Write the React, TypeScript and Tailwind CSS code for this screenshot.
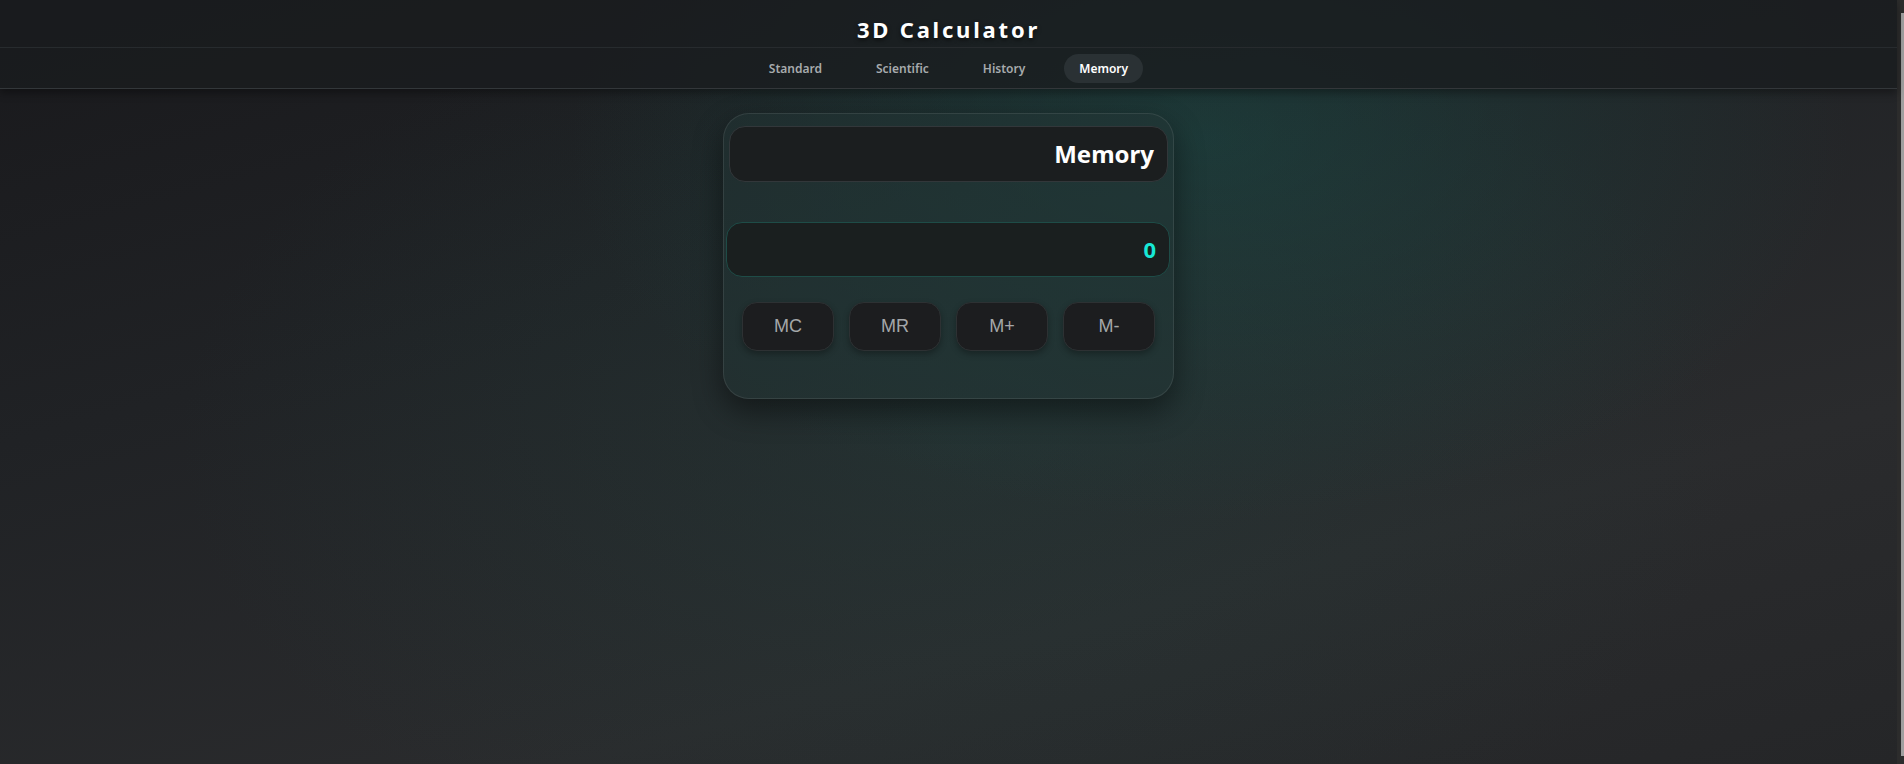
import { useState } from "react";

// Tabs shown in the header - only Memory is rendered in this view
const TABS = ["Standard", "Scientific", "History", "Memory"];
const MEMORY_KEYS = ["MC", "MR", "M+", "M-"];

export default function App() {
  const [active, setActive] = useState("Memory");
  const [memory] = useState(0);

  return (
    <div className="flex h-[764px] w-full overflow-hidden bg-[#1e1f22]">
      <div className="relative flex-1 flex flex-col bg-[radial-gradient(ellipse_640px_380px_at_1210px_140px,rgba(24,84,78,0.42),transparent),radial-gradient(ellipse_780px_480px_at_960px_440px,rgba(34,70,66,0.32),transparent),linear-gradient(165deg,#19191c_0%,#202225_35%,#2a2b2d_72%,#252628_100%)] font-['Noto_Sans',sans-serif]">
        {/* Header */}
        <header className="bg-[rgba(26,28,31,0.78)] border-b border-[#33373a] shadow-[0_4px_8px_rgba(0,0,0,0.35)]">
          <div className="pt-[14px] pb-[3px] border-b border-[#272b2e] text-center">
            <h1 className="text-[22px] leading-[30px] font-bold tracking-[2.8px] text-white [text-shadow:0_2px_4px_rgba(0,0,0,0.6)]">
              3D Calculator
            </h1>
          </div>
          <nav className="flex justify-center gap-6 pt-[6px] pb-[5px]">
            {TABS.map((tab) => (
              <button
                key={tab}
                onClick={() => setActive(tab)}
                className={
                  tab === active
                    ? "h-[29px] px-[15px] pt-[1px] rounded-full bg-[#2a3134] text-white text-[12px] font-semibold"
                    : "h-[29px] px-[15px] pt-[1px] rounded-full text-[#a7abad] text-[12px] font-semibold"
                }
              >
                {tab}
              </button>
            ))}
          </nav>
        </header>

        {/* Calculator */}
        <main className="flex justify-center mt-6">
          <div className="w-[451px] rounded-[26px] border border-[rgba(255,255,255,0.09)] bg-[rgba(34,52,51,0.5)] shadow-[0_12px_30px_rgba(0,0,0,0.45)] pb-[47px]">
            <div className="mt-3 mx-[5px] h-[56px] rounded-2xl border border-[#32373a] bg-[#1b1e1f] flex items-center justify-end pr-[13px]">
              <span className="text-2xl font-bold text-white">Memory</span>
            </div>

            <div className="mt-10 ml-[2px] mr-[3px] h-[55px] rounded-2xl border border-[#1e4c47] bg-[#1a1f1f] flex items-center justify-end pr-[13px]">
              <span className="text-[22px] font-bold text-[#17e8d6]">{memory}</span>
            </div>

            <div className="mt-[25px] px-[18px] grid grid-cols-4 gap-[15px]">
              {MEMORY_KEYS.map((key) => (
                <button
                  key={key}
                  className="h-[49px] rounded-[15px] border border-[#2d3133] bg-[#1c1d1f] shadow-[0_3px_6px_rgba(0,0,0,0.3)] text-[18px] text-[#a4a7a9] font-['Liberation_Sans',Arial,sans-serif]"
                >
                  {key}
                </button>
              ))}
            </div>
          </div>
        </main>
      </div>

      {/* Scrollbar strip visible at the right edge */}
      <div className="w-[7px] bg-[#2c2c2c] flex pl-[4px] pt-[13px] pb-[8px]">
        <div className="w-[3px] flex-1 bg-[#9f9f9f]" />
      </div>
    </div>
  );
}
